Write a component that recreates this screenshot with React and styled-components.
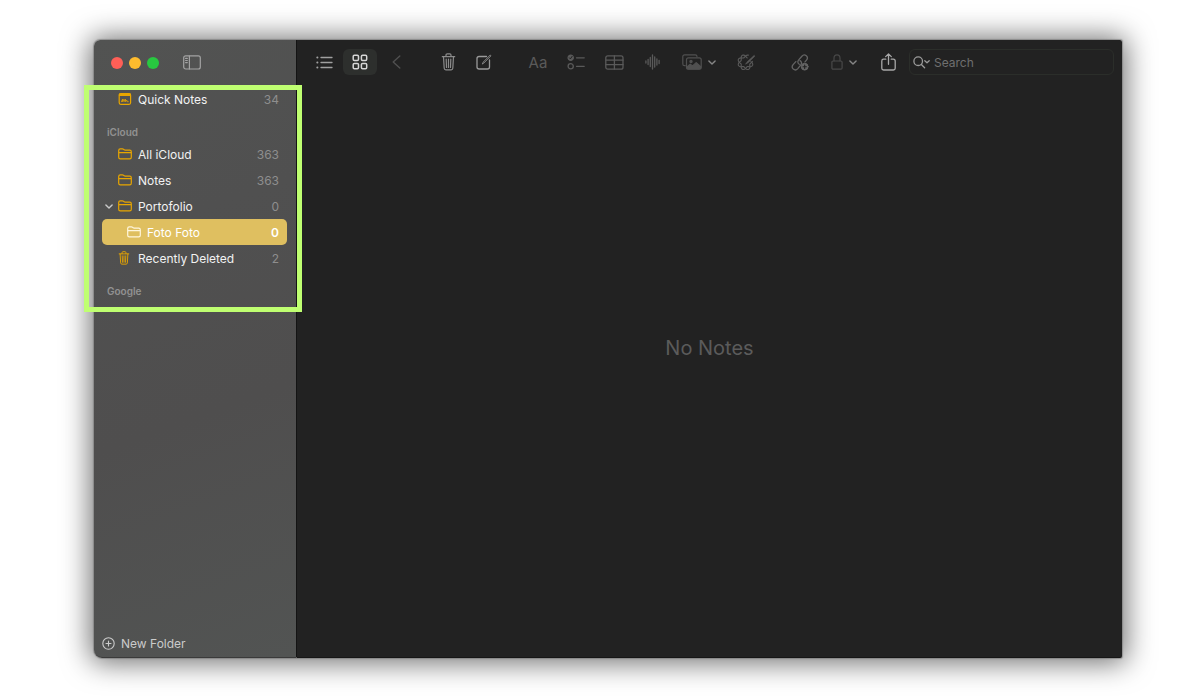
import React from 'react';
import styled, { createGlobalStyle } from 'styled-components';

const GlobalStyle = createGlobalStyle`
  * {
    box-sizing: border-box;
  }

  body {
    margin: 0;
    background: #ffffff;
    font-family: Inter, "Liberation Sans", sans-serif;
    font-size: 12px;
  }

  button, input {
    font: inherit;
    color: inherit;
  }
`;

const Page = styled.div`
  display: flex;
  min-height: 100vh;
  padding: 40px 78px 40px 94px;
`;

const Window = styled.div`
  display: flex;
  flex: 1;
  min-width: 0;
  border-radius: 6px 2px 2px 8px;
  box-shadow: 0 0 1px 1px rgba(120, 120, 120, 0.6), 0 1px 28px 4px rgba(0, 0, 0, 0.56);
`;

const Sidebar = styled.aside`
  display: flex;
  flex-direction: column;
  flex: 0 0 203px;
  border-right: 1px solid #141414;
  border-bottom: 1px solid #3a3a3a;
  border-radius: 6px 0 0 8px;
  background: linear-gradient(160deg, #525352 0%, #505050 30%, #4f4e4e 60%, #525453 100%);
`;

const TitleBar = styled.div`
  display: flex;
  align-items: center;
  gap: 6px;
  height: 45px;
  padding: 0 17px;
`;

const WindowDot = styled.button`
  width: 12px;
  height: 12px;
  padding: 0;
  border: 0;
  border-radius: 50%;
  background: ${props => props.$color};
`;

const SidebarToggle = styled.button`
  display: flex;
  margin-left: 18px;
  padding: 0;
  border: 0;
  background: none;
  color: #a3a3a3;
`;

const FolderArea = styled.nav`
  position: relative;
  padding: 1px 9px 12px 8px;
`;

const Highlight = styled.div`
  position: absolute;
  inset: 0 -6px 0 -10px;
  border: 5px solid #bfff71;
  pointer-events: none;
`;

const FolderList = styled.ul`
  margin: 0;
  padding: 0;
  list-style: none;
`;

const SectionTitle = styled.h2`
  height: 17px;
  margin: 12px 0 0;
  padding-left: 5px;
  color: #929292;
  font-size: 10px;
  font-weight: 600;
  line-height: 17px;
`;

const FolderRow = styled.a`
  display: flex;
  align-items: center;
  height: 26px;
  padding: 0 8px 0 ${props => (props.$nested ? '11px' : '2px')};
  border-radius: 5px;
  background: ${props => (props.$selected ? '#dfbf60' : 'transparent')};
  color: ${props => (props.$selected ? '#ffffff' : '#f2f2f2')};
  text-decoration: none;
`;

const RowArrow = styled.span`
  display: flex;
  width: 14px;
  padding-left: 1px;
  color: #c9c9c9;
`;

const RowIcon = styled.span`
  display: flex;
  width: 20px;
  color: ${props => (props.$selected ? '#fff6dc' : '#e8a600')};
`;

const RowCount = styled.span`
  margin-left: auto;
  color: ${props => (props.$selected ? '#ffffff' : '#8e8e8e')};
  font-weight: ${props => (props.$selected ? 600 : 400)};
`;

const NewFolder = styled.button`
  display: flex;
  align-items: center;
  gap: 6px;
  margin-top: auto;
  padding: 6px 8px;
  border: 0;
  background: none;
  color: #cbcbcb;
`;

const Main = styled.main`
  display: flex;
  flex-direction: column;
  flex: 1;
  min-width: 0;
  border-bottom: 1px solid #161616;
  border-radius: 0 2px 2px 0;
  background: #222222;
`;

const Toolbar = styled.div`
  display: flex;
  align-items: center;
  gap: 4px;
  height: 44px;
  padding: 0 8px 0 10px;
`;

const ToolGroup = styled.div`
  display: flex;
  gap: ${props => props.$gap || 4}px;
  margin-right: ${props => props.$space || 0}px;
`;

const ToolButton = styled.button`
  display: flex;
  align-items: center;
  justify-content: center;
  gap: 6px;
  width: ${props => props.$width || 34}px;
  height: 26px;
  padding: 0;
  border: 0;
  border-radius: 6px;
  background: ${props => (props.$active ? '#2d2f2d' : 'transparent')};
  color: ${props => props.$color || '#5a5a5a'};
  font-size: 15px;
`;

const MenuArrow = styled.span`
  display: flex;
  color: #858585;
`;

const SearchBox = styled.label`
  display: flex;
  align-items: center;
  gap: 4px;
  flex: 1;
  min-width: 0;
  height: 26px;
  padding: 0 4px 0 3px;
  border: 1px solid #2b2e2a;
  border-radius: 6px;
  color: #9a9a9a;
`;

const SearchInput = styled.input`
  flex: 1;
  min-width: 0;
  padding: 0;
  border: 0;
  outline: 0;
  background: transparent;

  &::placeholder {
    color: #6f6f6f;
    opacity: 1;
  }
`;

const EmptyState = styled.div`
  display: flex;
  flex: 1;
  align-items: center;
  justify-content: center;
  padding-bottom: 46px;
  color: #5b5b5b;
  font-size: 20px;
`;

const Icon = ({ w, h, stroke = 1.2, children }) => (
  <svg
    width={w}
    height={h}
    viewBox={`0 0 ${w} ${h}`}
    fill="none"
    stroke="currentColor"
    strokeWidth={stroke}
    strokeLinecap="round"
    strokeLinejoin="round"
    aria-hidden="true"
  >
    {children}
  </svg>
);

const SidebarIcon = () => (
  <Icon w={18} h={15}>
    <rect x="0.7" y="0.8" width="16.6" height="13.2" rx="2" />
    <path d="M6.4 1v13M2.6 3.4h1.7M2.6 5.5h1.7M2.6 7.6h1.7" />
  </Icon>
);

const FolderIcon = () => (
  <Icon w={14} h={12}>
    <path d="M.7 9.3V2.4C.7 1.4 1.3.8 2.3.8h2.1c.5 0 .8.1 1.2.5l.5.4c.3.3.6.4 1 .4h4.6c1 0 1.6.6 1.6 1.6v5.6c0 1-.6 1.6-1.6 1.6H2.3c-1 0-1.6-.6-1.6-1.6zM.9 4.7h12.2" />
  </Icon>
);

const QuickNoteIcon = () => (
  <Icon w={14} h={12}>
    <rect x="1.2" y="0.7" width="11.4" height="10.6" rx="1.5" />
    <path d="M1.5 1.2h10.800v1.200h-10.800z" fill="currentColor" />
    <path d="M3.4 8.7l1.1-2.500v2.500l1.500-2.500v2.500l1.500-2.500v2.500l1.300-1.600.3 1.600h1.200" strokeWidth="0.8" />
  </Icon>
);

const TrashIcon = ({ w = 12, h = 14 }) => (
  <svg width={w} height={h} viewBox="0 0 14 18" fill="none" stroke="currentColor" strokeWidth="1.2" strokeLinecap="round" aria-hidden="true">
    <path d="M.8 3.7h12.4M4.500 3.500V2c0-.7.5-1.1 1.200-1.100h2.600c.7 0 1.200.4 1.200 1.100v1.500M2 3.800l.7 11.500c.1 1 .7 1.600 1.600 1.600h5.400c.9 0 1.500-.6 1.600-1.600L12 3.800M4.700 6.200l.3 8.300M7 6.200v8.300M9.300 6.200L9 14.500" />
  </svg>
);

const ChevronIcon = () => (
  <Icon w={8} h={5} stroke={1.4}>
    <path d="M.9.9L4 4 7.1.9" />
  </Icon>
);

const ListIcon = () => (
  <Icon w={17} h={13} stroke={1.3}>
    <path d="M5 1.5h11M5 6.5h11M5 11.5h11" />
    <path d="M1.3 1.5h.1M1.3 6.5h.1M1.3 11.5h.1" strokeWidth="2" />
  </Icon>
);

const GridIcon = () => (
  <Icon w={16} h={16} stroke={1.5}>
    <rect x="1.2" y="1.2" width="5.3" height="5.3" rx="1.2" />
    <rect x="9.4" y="1.2" width="5.3" height="5.3" rx="1.2" />
    <rect x="1.2" y="9.4" width="5.3" height="5.3" rx="1.2" />
    <rect x="9.4" y="9.4" width="5.3" height="5.3" rx="1.2" />
  </Icon>
);

const BackIcon = () => (
  <Icon w={9} h={14} stroke={1.4}>
    <path d="M7.8 1L1.2 7l6.6 6" />
  </Icon>
);

const ComposeIcon = () => (
  <Icon w={16} h={16} stroke={1.3}>
    <path d="M10.500 2.500H3.200C1.900 2.500 1 3.300 1 4.600v8.300C1 14.200 1.900 15 3.200 15h8.200c1.300 0 2.100-.8 2.100-2.100V6" />
    <path d="M6.500 9.700l.8-1.700L14.200 1l.8.8-7 7.100z" strokeWidth="0.8" />
  </Icon>
);

const ChecklistIcon = () => (
  <Icon w={18} h={16} stroke={1.3}>
    <circle cx="3.7" cy="3.7" r="2.6" fill="currentColor" />
    <path d="M2.500 3.900l.9 1 1.700-2.500" stroke="#222222" strokeWidth="1" />
    <circle cx="3.7" cy="12.3" r="2.6" />
    <path d="M9.500 3.8h7.700M9.500 12.300h7.700" />
  </Icon>
);

const TableIcon = () => (
  <Icon w={19} h={15} stroke={1.3}>
    <rect x="0.8" y="0.8" width="17.2" height="13.4" rx="2" />
    <path d="M9.400 1v13M1 5.200h17M1 9.700h17" />
  </Icon>
);

const WaveIcon = () => (
  <Icon w={15} h={16} stroke={1.3}>
    <path d="M.9 7v2M3.100 5.500v5M5.300 3.500v9M7.500 1v14M9.700 3v10M11.900 5v6M14.100 6.500v3" />
  </Icon>
);

const MediaIcon = () => (
  <Icon w={20} h={16}>
    <path d="M3.200 11.700h-.6C1.500 11.700.8 11 .8 9.900V2.800C.8 1.600 1.500.9 2.600.9h10.600c1.100 0 1.800.7 1.800 1.700" />
    <rect x="4.5" y="3.8" width="14.7" height="11.3" rx="1.9" />
    <path d="M5 12.900l3.200-2.800 2.300 1.900 3.700-3.400 4.600 4v1c0 .9-.6 1.400-1.500 1.400H6.400c-.9 0-1.400-.5-1.400-1.300z" fill="currentColor" />
    <circle cx="9" cy="7.5" r="1.1" fill="currentColor" />
  </Icon>
);

// One wavy strand of the ring, open at the top right for the pen.
const strand = (sign) => {
  const points = [];
  for (let deg = -8; deg <= 292; deg += 6) {
    const angle = (deg * Math.PI) / 180;
    const radius = 6.2 + sign * 1.5 * Math.sin(angle * 4);
    points.push(`${(8.5 + radius * Math.cos(angle)).toFixed(2)} ${(9.3 + radius * Math.sin(angle)).toFixed(2)}`);
  }
  return `M${points.join('L')}`;
};

const SketchIcon = () => (
  <Icon w={19} h={18} stroke={1.1}>
    <path d={strand(1)} />
    <path d={strand(-1)} />
    <path d="M17 2.600L10.500 8.500l-2 2.700 2.900-1.700 6.300-6.200z" fill="currentColor" strokeWidth="0.6" />
  </Icon>
);

const LinkIcon = () => (
  <Icon w={18} h={17} stroke={1.3}>
    <path d="M8.300 10.300c-1.700-1-1.900-3-.6-4.400l3.200-3.700c1.200-1.400 3.100-1.500 4.400-.4 1.300 1.200 1.400 3 .2 4.400l-1.500 1.700" />
    <path d="M9 6.600c1.700 1 2 2.900.8 4.300l-3 3.700c-1.200 1.400-3.100 1.600-4.500.5-1.300-1.200-1.400-3-.2-4.400l2.700-3.100" />
    <circle cx="13.7" cy="12.7" r="3.4" fill="currentColor" strokeWidth="1" />
    <path d="M13.700 11v3.400M12 12.700h3.400" stroke="#222222" strokeWidth="1.1" />
  </Icon>
);

const LockIcon = () => (
  <Icon w={12} h={16}>
    <rect x="0.9" y="7" width="10.2" height="8.2" rx="1.2" />
    <path d="M3 6.800V4.200C3 2.200 4.200.9 6 .9s3 1.300 3 3.300v2.600" />
  </Icon>
);

const ShareIcon = () => (
  <Icon w={15} h={18} stroke={1.3}>
    <path d="M4.800 6.200H2.600C1.500 6.200.8 6.900.8 8v7.200c0 1.100.7 1.800 1.800 1.800h9.800c1.100 0 1.800-.7 1.800-1.800V8c0-1.100-.7-1.800-1.800-1.800h-2.200M7.500 11.300V1M4.700 3.600L7.500.9l2.800 2.700" />
  </Icon>
);

const SearchIcon = () => (
  <Icon w={17} h={13} stroke={1.3}>
    <circle cx="5.2" cy="5.2" r="4.3" />
    <path d="M8.400 8.500l3.200 3.300M11.800 4.800l2.200 2 2.200-2" />
  </Icon>
);

const PlusCircleIcon = () => (
  <Icon w={13} h={13} stroke={1.1}>
    <circle cx="6.5" cy="6.5" r="5.7" />
    <path d="M6.500 4v5M4 6.500h5" />
  </Icon>
);

const quickNotes = { name: 'Quick Notes', count: 34, icon: <QuickNoteIcon /> };

const icloudFolders = [
  { name: 'All iCloud', count: 363 },
  { name: 'Notes', count: 363 },
  { name: 'Portofolio', count: 0, open: true },
  { name: 'Foto Foto', count: 0, nested: true },
  { name: 'Recently Deleted', count: 2, icon: <TrashIcon /> },
];

const Folder = ({ folder, selected, onSelect }) => {
  const handleClick = (event) => {
    event.preventDefault();
    onSelect(folder.name);
  };

  return (
    <li>
      <FolderRow href="#" $nested={folder.nested} $selected={selected} onClick={handleClick}>
        <RowArrow>{folder.open && <ChevronIcon />}</RowArrow>
        <RowIcon $selected={selected}>{folder.icon || <FolderIcon />}</RowIcon>
        {folder.name}
        <RowCount $selected={selected}>{folder.count}</RowCount>
      </FolderRow>
    </li>
  );
};

class App extends React.Component {
  constructor(props) {
    super(props);
    this.state = {
      selected: 'Foto Foto',
      search: '',
    };

    this.handleSelect = this.handleSelect.bind(this);
    this.handleSearch = this.handleSearch.bind(this);
  }

  handleSelect(name) {
    this.setState({ selected: name });
  }

  handleSearch(event) {
    this.setState({ search: event.target.value });
  }

  render() {
    const { selected, search } = this.state;

    return (
      <>
        <GlobalStyle />
        <Page>
          <Window>
            <Sidebar>
              <TitleBar>
                <WindowDot $color="#ff5f57" aria-label="Close" />
                <WindowDot $color="#febc2e" aria-label="Minimize" />
                <WindowDot $color="#28c840" aria-label="Zoom" />
                <SidebarToggle aria-label="Toggle sidebar"><SidebarIcon /></SidebarToggle>
              </TitleBar>
              <FolderArea>
                <FolderList>
                  <Folder folder={quickNotes} selected={selected === quickNotes.name} onSelect={this.handleSelect} />
                </FolderList>
                <SectionTitle>iCloud</SectionTitle>
                <FolderList>
                  {icloudFolders.map((folder) => (
                    <Folder
                      key={folder.name}
                      folder={folder}
                      selected={selected === folder.name}
                      onSelect={this.handleSelect}
                    />
                  ))}
                </FolderList>
                <SectionTitle>Google</SectionTitle>
                <Highlight />
              </FolderArea>
              <NewFolder><PlusCircleIcon />New Folder</NewFolder>
            </Sidebar>
            <Main>
              <Toolbar>
                <ToolGroup $gap={2} $space={14}>
                  <ToolButton $color="#a0a0a0" aria-label="List view"><ListIcon /></ToolButton>
                  <ToolButton $active $color="#d6d6d6" aria-label="Gallery view"><GridIcon /></ToolButton>
                  <ToolButton $color="#505050" aria-label="Back"><BackIcon /></ToolButton>
                </ToolGroup>
                <ToolGroup $gap={2} $space={16}>
                  <ToolButton $color="#8c8c8c" aria-label="Delete"><TrashIcon w={15} h={18} /></ToolButton>
                  <ToolButton $color="#9a9a9a" aria-label="New note"><ComposeIcon /></ToolButton>
                </ToolGroup>
                <ToolGroup $space={16}>
                  <ToolButton>Aa</ToolButton>
                  <ToolButton aria-label="Checklist"><ChecklistIcon /></ToolButton>
                  <ToolButton aria-label="Table"><TableIcon /></ToolButton>
                  <ToolButton aria-label="Audio"><WaveIcon /></ToolButton>
                  <ToolButton $width={52} $color="#505050" aria-label="Media">
                    <MediaIcon />
                    <MenuArrow><ChevronIcon /></MenuArrow>
                  </ToolButton>
                  <ToolButton aria-label="Sketch"><SketchIcon /></ToolButton>
                </ToolGroup>
                <ToolGroup>
                  <ToolButton $color="#646464" aria-label="Link"><LinkIcon /></ToolButton>
                  <ToolButton $width={46} $color="#484848" aria-label="Lock">
                    <LockIcon />
                    <MenuArrow><ChevronIcon /></MenuArrow>
                  </ToolButton>
                  <ToolButton $color="#a8a8a8" aria-label="Share"><ShareIcon /></ToolButton>
                </ToolGroup>
                <SearchBox>
                  <SearchIcon />
                  <SearchInput type="text" placeholder="Search" aria-label="Search" value={search} onChange={this.handleSearch} />
                </SearchBox>
              </Toolbar>
              <EmptyState>No Notes</EmptyState>
            </Main>
          </Window>
        </Page>
      </>
    );
  }
}

export default App;
